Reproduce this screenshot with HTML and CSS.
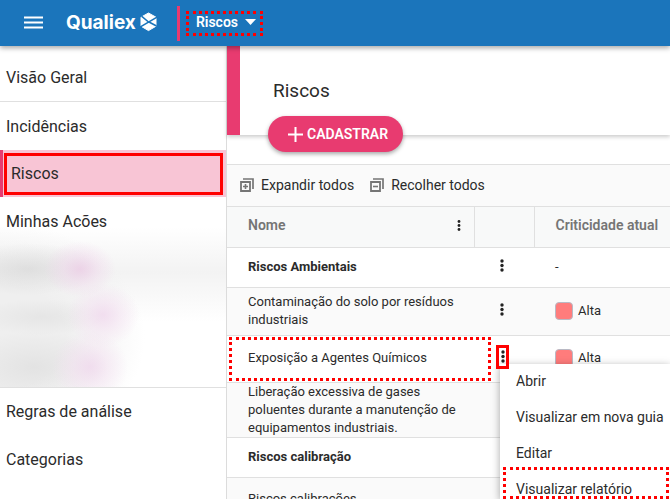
FILE: index.html
```
<!DOCTYPE html>
<html lang="pt-BR">
<head>
    <meta charset="UTF-8">
    <meta name="viewport" content="width=device-width, initial-scale=1.0">
    <title>Qualiex - Riscos</title>
    <link rel="stylesheet" href="styles.css">
</head>
<body>
    <header class="topbar">
        <button class="menu-toggle" aria-label="Menu">
            <svg width="19" height="14" viewBox="0 0 19 14"><path d="M0 1.5h19M0 6.500h19M0 11.500h19" stroke="#fff" stroke-width="1.800"/></svg>
        </button>
        <a class="logo" href="#">
            <span>Qualiex</span>
            <svg width="17" height="20" viewBox="0 0 17 20">
                <path d="M8.500 1 16 5.200v9L8.500 18.600 1 14.200v-9z" fill="#fff" stroke="#fff" stroke-linejoin="round"/>
                <path d="M0 15 17 5.200M1.500 4.200 8.500 10M9 10l7.500 4" stroke="#1b75bb" stroke-width="1.500" fill="none"/>
            </svg>
        </a>
        <div class="module">
            <button class="module-select marked">
                Riscos
                <svg width="11" height="6" viewBox="0 0 11 6"><path d="M0 0h11L5.500 6z" fill="#fff"/></svg>
            </button>
        </div>
    </header>

    <div class="layout">
        <!-- Sidebar -->
        <nav class="sidebar">
            <a class="nav-item nav-first" href="#">Visão Geral</a>
            <a class="nav-item" href="#">Incidências</a>
            <a class="nav-item active" href="#"><span>Riscos</span></a>
            <a class="nav-item" href="#">Minhas Acões</a>
            <div class="nav-hidden"></div>
            <a class="nav-item nav-group" href="#">Regras de análise</a>
            <a class="nav-item" href="#">Categorias</a>
        </nav>

        <main class="content">
            <section class="page-head">
                <h1>Riscos</h1>
                <button class="btn-add">
                    <svg width="15" height="15" viewBox="0 0 15 15"><path d="M7.500 0v15M0 7.500h15" stroke="#fff" stroke-width="2"/></svg>
                    CADASTRAR
                </button>
            </section>

            <!-- Risk list -->
            <section class="grid">
                <div class="toolbar">
                    <button class="tool">
                        <svg width="14" height="14" viewBox="0 0 14 14" fill="none" stroke="#757575"><path d="M3 1h10v10" stroke-width="1.700"/><path d="M1 4h9v9H1z" stroke-width="1.800"/><path d="M5.500 6v5M3 8.500h5" stroke-width="1.600"/></svg>
                        Expandir todos
                    </button>
                    <button class="tool">
                        <svg width="14" height="14" viewBox="0 0 14 14" fill="none" stroke="#757575"><path d="M3 1h10v10" stroke-width="1.700"/><path d="M1 4h9v9H1z" stroke-width="1.800"/><path d="M3 8.500h5" stroke-width="1.600"/></svg>
                        Recolher todos
                    </button>
                </div>
                <table>
                    <thead>
                        <tr>
                            <th class="col-name">
                                <div class="th-inner">
                                    Nome
                                    <button class="dots" aria-label="Opções da coluna"><svg width="4" height="11" viewBox="0 0 4 11"><circle cx="2" cy="1.500" r="1.400"/><circle cx="2" cy="5.500" r="1.400"/><circle cx="2" cy="9.500" r="1.400"/></svg></button>
                                </div>
                            </th>
                            <th class="col-actions"></th>
                            <th>Criticidade atual</th>
                        </tr>
                    </thead>
                    <tbody>
                        <tr class="row-group">
                            <td>Riscos Ambientais</td>
                            <td class="actions"><button class="dots" aria-label="Ações"><svg width="4" height="13" viewBox="0 0 4 13"><circle cx="2" cy="2" r="1.700"/><circle cx="2" cy="6.500" r="1.700"/><circle cx="2" cy="11" r="1.700"/></svg></button></td>
                            <td><span class="level">-</span></td>
                        </tr>
                        <tr class="row-two">
                            <td>Contaminação do solo por resíduos industriais</td>
                            <td class="actions"><button class="dots" aria-label="Ações"><svg width="4" height="13" viewBox="0 0 4 13"><circle cx="2" cy="2" r="1.700"/><circle cx="2" cy="6.500" r="1.700"/><circle cx="2" cy="11" r="1.700"/></svg></button></td>
                            <td><span class="level"><i class="swatch"></i>Alta</span></td>
                        </tr>
                        <tr class="row-selected">
                            <td class="cell-marked"><div class="marked">Exposição a Agentes Químicos</div></td>
                            <td class="actions">
                                <div class="menu-anchor">
                                    <button class="dots open" aria-label="Ações"><svg width="4" height="13" viewBox="0 0 4 13"><circle cx="2" cy="2" r="1.700"/><circle cx="2" cy="6.500" r="1.700"/><circle cx="2" cy="11" r="1.700"/></svg></button>
                                    <div class="menu">
                                        <button>Abrir</button>
                                        <button>Visualizar em nova guia</button>
                                        <button>Editar</button>
                                        <button class="marked">Visualizar relatório</button>
                                    </div>
                                </div>
                            </td>
                            <td><span class="level"><i class="swatch"></i>Alta</span></td>
                        </tr>
                        <tr class="row-three">
                            <td>Liberação excessiva de gases poluentes durante a manutenção de equipamentos industriais.</td>
                            <td></td>
                            <td></td>
                        </tr>
                        <tr class="row-group">
                            <td>Riscos calibração</td>
                            <td></td>
                            <td></td>
                        </tr>
                        <tr class="row-last">
                            <td>Riscos calibrações</td>
                            <td></td>
                            <td></td>
                        </tr>
                    </tbody>
                </table>
            </section>
        </main>
    </div>
</body>
</html>
```

FILE: styles.css
```
* {
    box-sizing: border-box;
}
body {
    margin: 0;
    height: 100vh;
    overflow: hidden;
    display: flex;
    flex-direction: column;
    background: #fff;
    color: #2b2b2b;
    font-family: Roboto, "Liberation Sans", sans-serif;
    font-size: 14px;
}
button {
    border: none;
    background: none;
    padding: 0;
    color: inherit;
    font: inherit;
    cursor: pointer;
}
a {
    color: inherit;
    text-decoration: none;
}
.marked {
    border: 3px dotted #f00;
}

/* Top bar */
.topbar {
    position: relative;
    z-index: 3;
    flex: none;
    display: flex;
    align-items: center;
    height: 46px;
    padding: 0 24px;
    background: #1b75bb;
    color: #fff;
    box-shadow: 0 2px 5px rgba(0,0,0,0.35);
}
.menu-toggle,
.menu-toggle svg,
.logo svg {
    display: block;
}
.logo {
    display: flex;
    align-items: center;
    gap: 4px;
    margin-left: 23px;
    padding-bottom: 2px;
    font-family: Inter, Roboto, sans-serif;
    font-size: 19px;
    font-weight: 700;
}
.module {
    margin-left: 20px;
    padding: 5px 0 5px 6px;
    border-left: 3px solid #e83b70;
}
.module-select {
    display: flex;
    align-items: center;
    gap: 7px;
    height: 25px;
    padding: 0 4px 2px 7px;
    font-size: 14px;
    font-weight: 600;
}

.layout {
    flex: 1;
    display: flex;
    min-height: 0;
}

/* Sidebar */
.sidebar {
    flex: none;
    width: 227px;
    border-right: 1px solid #dcdcdc;
}
.nav-item {
    display: flex;
    align-items: center;
    height: 48px;
    padding-left: 6px;
    font-size: 16px;
}
.nav-first {
    height: 56px;
    padding-top: 8px;
    border-bottom: 1px solid #e0e0e0;
}
.nav-item.active {
    height: 47px;
    padding: 2px 3px 2px 1px;
    border-left: 3px solid #e83b70;
    background: #f8c5d5;
}
.nav-item.active span {
    flex: 1;
    display: flex;
    align-items: center;
    height: 42px;
    padding-left: 4px;
    border: 3px solid #f00;
}
.nav-hidden {
    height: 160px;
    margin-top: -18px;
    background:
        radial-gradient(ellipse 36px 28px at 80px 42px, rgba(236,205,230,0.8), rgba(240,215,236,0.5) 45%, rgba(245,225,242,0)),
        radial-gradient(ellipse 36px 32px at 103px 88px, rgba(240,216,237,0.8), rgba(243,222,240,0.5) 45%, rgba(245,225,242,0)),
        radial-gradient(ellipse 38px 36px at 90px 140px, rgba(240,216,237,0.8), rgba(243,222,240,0.5) 45%, rgba(245,225,242,0)),
        radial-gradient(ellipse 74px 26px at 28px 42px, rgba(205,205,205,0.5), rgba(225,225,225,0)),
        radial-gradient(ellipse 64px 18px at 42px 90px, rgba(215,215,215,0.4), rgba(230,230,230,0)),
        radial-gradient(ellipse 74px 36px at 34px 140px, rgba(215,215,215,0.5), rgba(230,230,230,0)),
        radial-gradient(ellipse 145px 115px at 0 110px, #efefef 45%, rgba(248,244,248,0)),
        linear-gradient(rgba(243,243,243,0), #f3f3f3 45px, rgba(243,243,243,0) 95px);
}
.nav-group {
    border-top: 1px solid #e0e0e0;
}

/* Page title */
.content {
    flex: 1;
    min-width: 0;
}
.page-head {
    position: relative;
    height: 89px;
    padding: 34px 0 0 33px;
    border-left: 13px solid #e83b70;
    box-shadow: 0 2px 4px rgba(0,0,0,0.2);
}
h1 {
    margin: 0;
    font-size: 19px;
    line-height: 22px;
    font-weight: 400;
}
.btn-add {
    position: absolute;
    left: 28px;
    bottom: -17px;
    display: flex;
    align-items: center;
    gap: 4px;
    height: 36px;
    padding: 0 15px 0 20px;
    border-radius: 18px;
    background: #e83b70;
    color: #fff;
    font-size: 14px;
    font-weight: 600;
    box-shadow: 0 2px 4px rgba(0,0,0,0.35);
}

/* Grid */
.grid {
    margin-top: 29px;
    border-top: 1px solid #e0e0e0;
}
.toolbar {
    display: flex;
    align-items: center;
    gap: 16px;
    height: 41px;
    padding: 0 0 2px 13px;
    background: #fafafa;
}
.tool {
    display: flex;
    align-items: center;
    gap: 7px;
}
table {
    width: 100%;
    table-layout: fixed;
    border-collapse: collapse;
}
th,
td {
    padding: 0 16px 2px 21px;
    border-top: 1px solid #e0e0e0;
    text-align: left;
    font-size: 13px;
    line-height: 18px;
}
th {
    height: 41px;
    padding-bottom: 4px;
    background: #f8f9f9;
    border-right: 1px solid #e0e0e0;
    color: #757575;
    font-size: 14px;
    font-weight: 600;
}
th:last-child {
    padding-right: 0;
    border-right: none;
}
.col-name {
    width: 247px;
    padding-right: 13px;
}
.col-actions {
    width: 60px;
}
.th-inner {
    display: flex;
    align-items: center;
    justify-content: space-between;
}
.dots,
.dots svg {
    display: block;
}
.dots {
    color: #222;
    fill: currentColor;
}
td.actions {
    padding: 0 0 4px 26px;
}
.row-group {
    height: 40px;
    font-weight: 700;
}
.row-two {
    height: 48px;
}
.row-selected {
    height: 47px;
}
.row-three {
    height: 55px;
}
.row-three td {
    padding-bottom: 0;
}
.row-last {
    height: 44px;
}
tbody tr:nth-child(even) {
    background: #fafafa;
}
td.cell-marked {
    padding: 0 0 0 2px;
}
.cell-marked .marked {
    display: flex;
    align-items: center;
    width: 262px;
    height: 44px;
    padding: 0 0 2px 16px;
}
.level {
    display: flex;
    align-items: center;
    gap: 5px;
    font-weight: 400;
}
.swatch {
    width: 18px;
    height: 18px;
    border: 1px solid #b9b9c4;
    border-radius: 4px;
    background: #ff7c7c;
}

/* Row menu */
.menu-anchor {
    position: relative;
}
.dots.open {
    position: relative;
    z-index: 2;
    width: 13px;
    height: 24px;
    margin-left: -4px;
    padding: 0 2px 2px;
    border: 3px solid #f00;
}
.menu {
    position: absolute;
    z-index: 1;
    top: 19px;
    left: 0;
    width: 170px;
    background: #fff;
    box-shadow: 0 2px 8px rgba(0,0,0,0.35);
}
.menu button {
    display: block;
    width: 100%;
    height: 36px;
    padding: 0 0 2px 16px;
    text-align: left;
    font-size: 14px;
}
.menu button.marked {
    width: 166px;
    height: 32px;
    margin: -5px 0 0 3px;
    padding: 10px 0 0 10px;
}
```
